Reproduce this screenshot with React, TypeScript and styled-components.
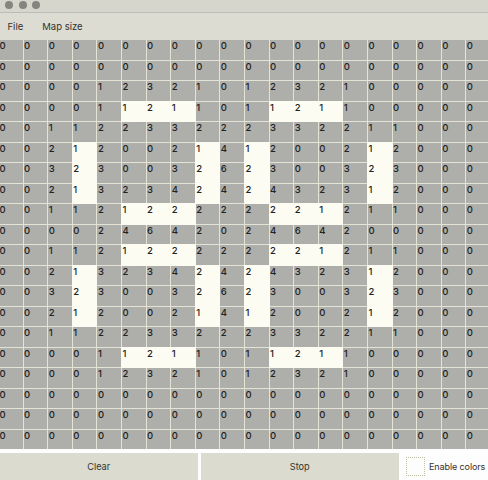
import React from 'react';
import styled, { createGlobalStyle } from 'styled-components';

const GlobalStyle = createGlobalStyle`
  * { box-sizing: border-box; }
  body { margin: 0; overflow: hidden; background: #fdfdfd; }
`;

const Window = styled.div`
  width: 488px;
  height: 480px;
  display: flex;
  flex-direction: column;
  overflow: hidden;
  background: #fdfdfd;
  color: #33332e;
  font: 9.5px/12px Inter, "Liberation Sans", sans-serif;
`;

const TitleBar = styled.div`
  flex: 0 0 13px;
  display: flex;
  gap: 5.5px;
  padding: 1px 0 0 5px;
  background: #d6d6cd;
  border-bottom: 1px solid #bdbdb8;
`;

const WindowDot = styled.span`
  width: 8px;
  height: 8px;
  border-radius: 50%;
  background: #858580;
`;

const MenuBar = styled.div`
  flex: 0 0 27px;
  display: flex;
  align-items: center;
  gap: 19px;
  padding: 1px 0 0 7.5px;
  background: #dcdcd2;
`;

const MenuItem = styled.span`
  white-space: nowrap;
`;

const Board = styled.div`
  flex: 0 0 409px;
  width: 492px;
  margin-left: -1px;
  display: grid;
  grid-template-columns: repeat(20, 23.6px);
  grid-auto-rows: 19.5px;
  gap: 1px;
  background: #e4e4d6;
  overflow: hidden;
`;

const Cell = styled.div<{ $alive: boolean }>`
  padding-left: 0.5px;
  line-height: 12px;
  font-size: 9.5px;
  font-weight: 500;
  color: #22221e;
  background: ${p => (p.$alive ? '#fcfcf3' : '#aeaeab')};
  box-shadow: ${p => (p.$alive ? '0 0 0 1px #fcfcf3' : 'none')};
`;

const Controls = styled.div`
  flex: 1;
  display: flex;
  padding-top: 4px;
`;

const Button = styled.button`
  flex: 0 0 197.5px;
  height: 27px;
  margin-right: 3.5px;
  padding: 0;
  border: 0;
  background: #dbdbd0;
  color: inherit;
  font: inherit;
  font-size: 9.2px;
`;

const Toggle = styled.label`
  display: flex;
  align-items: center;
  gap: 4px;
  padding-left: 4px;
  font-size: 9px;
  letter-spacing: -0.1px;
  white-space: nowrap;
`;

const Box = styled.span`
  width: 19px;
  height: 19px;
  border: 1px dotted #c0c0a4;
`;

const SIZE = 20;
const barColumns = [5, 6, 7, 11, 12, 13];
const pillarColumns = [3, 8, 10, 15];
const barRows = [3, 8, 10, 15];
const pillarRows = [5, 6, 7, 11, 12, 13];

const isAlive = (row: number, col: number) =>
  (barRows.includes(row) && barColumns.includes(col)) ||
  (pillarRows.includes(row) && pillarColumns.includes(col));

const countNeighbours = (row: number, col: number) => {
  let count = 0;
  for (let dr = -1; dr <= 1; dr++) {
    for (let dc = -1; dc <= 1; dc++) {
      if ((dr !== 0 || dc !== 0) && isAlive(row + dr, col + dc)) count++;
    }
  }
  return count;
};

const cells = Array.from({ length: SIZE * SIZE }, (_, i) => {
  const row = Math.floor(i / SIZE);
  const col = i % SIZE;
  return { alive: isAlive(row, col), neighbours: countNeighbours(row, col) };
});

export default function App() {
  return (
    <>
      <GlobalStyle />
      <Window>
        <TitleBar>
          <WindowDot />
          <WindowDot />
          <WindowDot />
        </TitleBar>
        <MenuBar>
          <MenuItem>File</MenuItem>
          <MenuItem>Map size</MenuItem>
        </MenuBar>
        <Board>
          {cells.map((cell, i) => (
            <Cell key={i} $alive={cell.alive}>{cell.neighbours}</Cell>
          ))}
        </Board>
        <Controls>
          <Button>Clear</Button>
          <Button>Stop</Button>
          <Toggle>
            <Box />
            Enable colors
          </Toggle>
        </Controls>
      </Window>
    </>
  );
}
